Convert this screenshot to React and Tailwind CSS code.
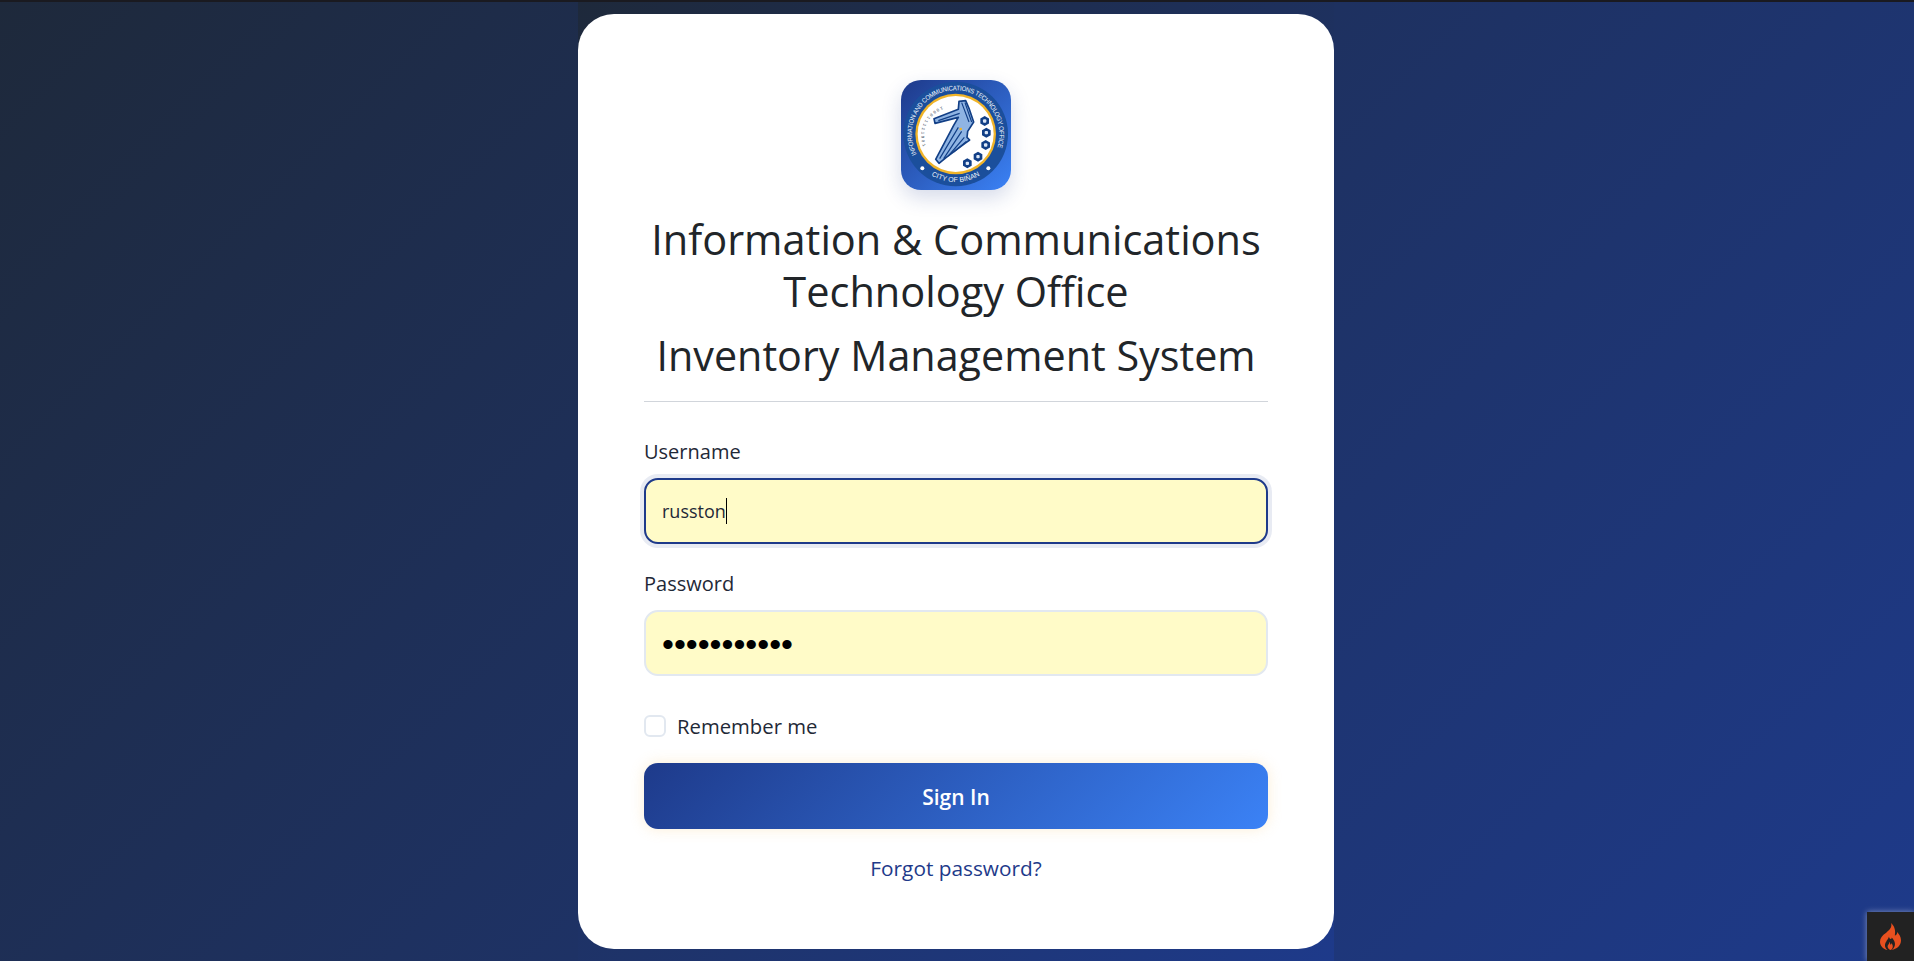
import React from 'react';

const BAND_TEXT = 'INFORMATION AND COMMUNICATIONS TECHNOLOGY OFFICE';
const HEXES = [[315, 183], [320, 218], [318, 255], [295, 290], [263, 310]];

function hexPoints(cx, cy, r) {
  var pts = [];
  for (var i = 0; i < 6; i++) {
    var a = Math.PI / 6 + (i * Math.PI) / 3;
    pts.push((cx + r * Math.cos(a)).toFixed(1) + ',' + (cy + r * Math.sin(a)).toFixed(1));
  }
  return pts.join(' ');
}

function SealLogo() {
  return (
    <div className="w-[110px] h-[110px] rounded-[20px] bg-gradient-to-br from-[#1e3a8a] to-[#3b82f6] shadow-[0_8px_20px_rgba(30,58,138,0.18)] overflow-hidden">
      <svg viewBox="64 60 330 330" className="w-full h-full block">
        <defs>
          <path id="sealTop" d="M105 290 A140 140 0 0 1 88 222 A140 140 0 0 1 368 222 A140 140 0 0 1 351 290" transform="translate(0 0)" />
          <path id="sealBottom" d="M135 332 A144 144 0 0 0 321 332" />
          <path id="sealBinary" d="M188 140 A92 92 0 0 0 134 268" />
        </defs>
        <circle cx="228" cy="222" r="157" fill="#1b4f9c" />
        <circle cx="228" cy="222" r="121" fill="#f0b429" />
        <circle cx="228" cy="222" r="114" fill="#ffffff" />
        <text fontFamily="Liberation Sans, sans-serif" fontSize="20" fill="#eef4fb" dominantBaseline="central">
          <textPath href="#sealTop" startOffset="4" textLength="550" lengthAdjust="spacingAndGlyphs">{BAND_TEXT}</textPath>
        </text>
        <text fontFamily="Liberation Sans, sans-serif" fontSize="21" fill="#eef4fb" textAnchor="middle">
          <textPath href="#sealBottom" startOffset="50%">CITY OF BIÑAN</textPath>
        </text>
        <text fontFamily="Liberation Mono, monospace" fontSize="13" fill="#475569" letterSpacing="5">
          <textPath href="#sealBinary">1000111110011</textPath>
        </text>
        <circle cx="128" cy="325" r="6" fill="#ffffff" />
        <circle cx="326" cy="325" r="6" fill="#ffffff" />
        <path d="M163 176 L236 148 L238 124 L258 122 L268 145 L282 186 L264 214 L262 232 L270 240 L256 250 L200 292 L178 310 L168 298 L222 196 L236 172 L166 190 Z" fill="#8fb4e3" stroke="#123f86" strokeWidth="5" strokeLinejoin="round" />
        <path d="M180 296 L236 202 M192 296 L246 214 M206 288 L254 232 M222 276 L260 244 M176 182 L240 160 M246 128 L268 186 M256 128 L276 186" stroke="#123f86" strokeWidth="3.5" fill="none" />
        <circle cx="243" cy="207" r="4" fill="#f0b429" />
        {HEXES.map(function(h) {
          return (
            <g key={h[0] + '-' + h[1]}>
              <polygon points={hexPoints(h[0], h[1], 15)} fill="#123f86" />
              <rect x={h[0] - 5} y={h[1] - 5} width="10" height="10" rx="3" fill="#dbe7f7" />
            </g>
          );
        })}
      </svg>
    </div>
  );
}

function FlameBadge() {
  return (
    <div className="absolute right-0 bottom-0 w-[47px] h-[49px] bg-[#222222] shadow-[0_0_6px_rgba(255,255,255,0.45)] flex items-center justify-center">
      <svg viewBox="0 0 61 78" className="w-[21px] h-[27px] block">
        <path fill="#e8501f" d="M32 0 C36 12 28 20 18 28 C6 36 0 44 0 54 C0 66 10 76 22 78 C14 72 12 62 18 54 C20 50 24 46 26 40 C28 48 34 48 34 42 C42 50 46 60 42 68 C40 72 38 76 34 78 C48 76 61 66 61 50 C61 40 55 32 50 26 C50 32 47 36 43 36 C46 22 42 8 32 0 Z" />
        <path fill="#e8501f" d="M28 54 C28 60 22 62 22 68 C22 74 27 77 30 78 C35 77 38 72 37 66 C36 62 34 60 33 58 C33 62 31 63 30 62 C29 60 30 56 28 54 Z" />
      </svg>
    </div>
  );
}

export default function App() {
  return (
    <div className="relative h-[961px] overflow-hidden flex flex-col bg-[linear-gradient(135deg,#1e293b,#1e3a8a)] font-['Open_Sans',sans-serif] text-[#1f2937]">
      <div className="h-[2px] bg-[#1a1a20]" />
      <div className="flex-1 flex justify-center pr-[2px]">
        <div className="w-[756px] pt-[12px] bg-[linear-gradient(135deg,#1e293b,#1e3a8a)]">
          <div className="h-[935px] bg-white rounded-[36px] px-[66px] pt-[66px]">
            <div className="flex justify-center">
              <SealLogo />
            </div>
            <h1 className="mt-[23px] -mx-[20px] text-center text-[41.5px] leading-[52px] font-normal text-[#212529]">
              Information &amp; Communications<br />Technology Office
            </h1>
            <h2 className="mt-[12px] text-center text-[41.3px] leading-[52px] font-normal text-[#212529]">Inventory Management System</h2>
            <div className="mt-[20px] h-px bg-[#d1d5db]" />

            <label className="block mt-[36px] text-[20px] leading-[28px]">Username</label>
            <div className="relative mt-[12px]">
              <input
                readOnly
                type="text"
                value="russton"
                className="block w-full h-[66px] rounded-[14px] border-2 border-[#1e3a8a] bg-[#fffbc8] pl-[16px] text-[18px] text-[#1f2937] outline-none shadow-[0_0_0_4px_rgba(30,58,138,0.1)]"
              />
              <span className="absolute left-[82px] top-[20px] w-px h-[26px] bg-black" />
            </div>

            <label className="block mt-[26px] text-[20px] leading-[28px]">Password</label>
            <input
              readOnly
              type="password"
              value="russton1234"
              className="block mt-[12px] w-full h-[66px] rounded-[14px] border-2 border-[#e2e8f0] bg-[#fffbc8] pl-[16px] pt-[2px] font-['Liberation_Sans',sans-serif] text-[34px] text-black outline-none"
            />

            <div className="mt-[36px] flex items-center gap-[11px]">
              <span className="w-[22px] h-[22px] rounded-[6px] border-2 border-[#e2e8f0] bg-white" />
              <span className="text-[20.3px] leading-[28px]">Remember me</span>
            </div>

            <button type="button" className="mt-[23px] w-full h-[66px] pt-[3px] rounded-[14px] bg-[linear-gradient(135deg,#1e3a8a,#3b82f6)] text-white text-[21px] font-semibold shadow-[0_0_14px_rgba(245,200,120,0.3)]">
              Sign In
            </button>

            <div className="mt-[25px] text-center">
              <a href="#forgot" className="text-[20.8px] leading-[28px] text-[#1e3a8a]">Forgot password?</a>
            </div>
          </div>
        </div>
      </div>
      <FlameBadge />
    </div>
  );
}
